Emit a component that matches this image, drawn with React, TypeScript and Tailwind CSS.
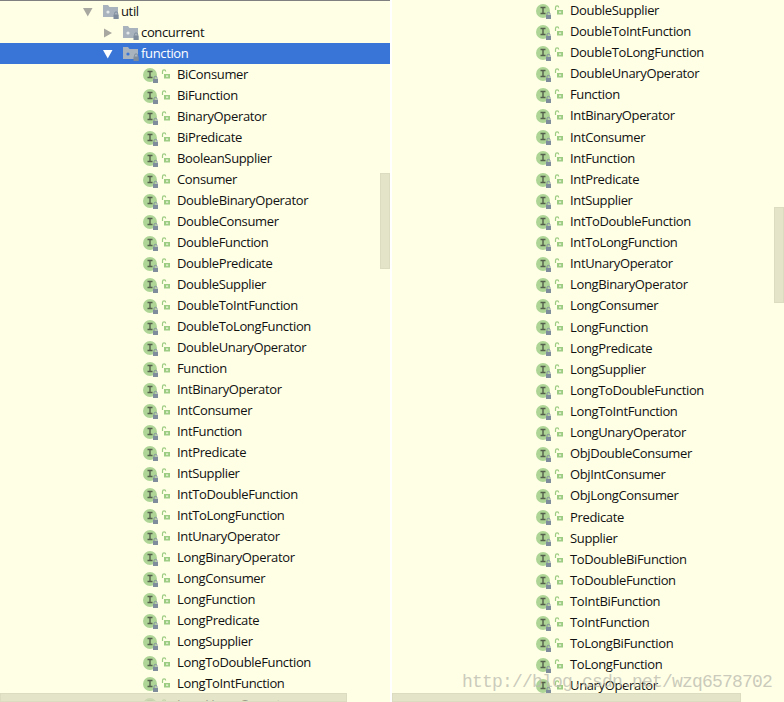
import React from 'react';

const LEFT_ITEMS = [
  'BiConsumer', 'BiFunction', 'BinaryOperator', 'BiPredicate', 'BooleanSupplier', 'Consumer',
  'DoubleBinaryOperator', 'DoubleConsumer', 'DoubleFunction', 'DoublePredicate', 'DoubleSupplier',
  'DoubleToIntFunction', 'DoubleToLongFunction', 'DoubleUnaryOperator', 'Function', 'IntBinaryOperator',
  'IntConsumer', 'IntFunction', 'IntPredicate', 'IntSupplier', 'IntToDoubleFunction', 'IntToLongFunction',
  'IntUnaryOperator', 'LongBinaryOperator', 'LongConsumer', 'LongFunction', 'LongPredicate', 'LongSupplier',
  'LongToDoubleFunction', 'LongToIntFunction', 'LongUnaryOperator',
];

const RIGHT_ITEMS = [
  'DoubleSupplier', 'DoubleToIntFunction', 'DoubleToLongFunction', 'DoubleUnaryOperator', 'Function',
  'IntBinaryOperator', 'IntConsumer', 'IntFunction', 'IntPredicate', 'IntSupplier', 'IntToDoubleFunction',
  'IntToLongFunction', 'IntUnaryOperator', 'LongBinaryOperator', 'LongConsumer', 'LongFunction',
  'LongPredicate', 'LongSupplier', 'LongToDoubleFunction', 'LongToIntFunction', 'LongUnaryOperator',
  'ObjDoubleConsumer', 'ObjIntConsumer', 'ObjLongConsumer', 'Predicate', 'Supplier', 'ToDoubleBiFunction',
  'ToDoubleFunction', 'ToIntBiFunction', 'ToIntFunction', 'ToLongBiFunction', 'ToLongFunction', 'UnaryOperator',
];

function InterfaceIcon() {
  return (
    <svg width="34" height="18" viewBox="0 0 34 18" className="shrink-0">
      <circle cx="7" cy="9" r="7" fill="#aed596" />
      <path d="M4.5 5.5h5M4.5 11.5h5M7 5.5v6" stroke="#55604c" strokeWidth="1.4" fill="none" />
      {/* small grey lock on the badge */}
      <path d="M11 13v-1.2a1.5 1.5 0 0 1 3 0V13" stroke="#7f8c9c" strokeWidth="1" fill="none" />
      <rect x="10" y="13" width="5" height="4" fill="#7f8c9c" />
      {/* open padlock, public access */}
      <path d="M19.5 8V5.5a1.6 1.6 0 0 1 3.2 0" stroke="#9ccb82" strokeWidth="1.2" fill="none" />
      <rect x="21" y="8" width="6" height="4.5" fill="#9ccb82" />
      <rect x="23" y="9.3" width="2.2" height="1.8" fill="#dcedc8" />
    </svg>
  );
}

function FolderIcon({ dot }: { dot: string }) {
  return (
    <svg width="17" height="17" viewBox="0 0 17 17" className="shrink-0">
      <path d="M0 2h5l1.5 2H15v10H0z" fill="#a8b3bd" />
      <circle cx="5" cy="9" r="1.6" fill={dot} />
      <path d="M11.5 11.5v-1a1.6 1.6 0 0 1 3.2 0v1" stroke="#7f8c9c" strokeWidth="1" fill="none" />
      <rect x="10.5" y="11.5" width="5.2" height="4.5" fill="#7f8c9c" />
    </svg>
  );
}

function Arrow({ open, color }: { open: boolean; color: string }) {
  return (
    <svg width="10" height="10" viewBox="0 0 10 10" className="shrink-0">
      <path d={open ? 'M0 1h9.5L4.75 9.5z' : 'M1 0.5L9 5 1 9.5z'} fill={color} />
    </svg>
  );
}

function ClassRow({ name, right }: { name: string; right?: boolean }) {
  return (
    <div className={right ? 'flex h-[21.12px] shrink-0 items-center pl-[144px]' : 'flex h-[21px] shrink-0 items-center pl-[143px]'}>
      <InterfaceIcon />
      <span className="text-[13px] tracking-[-0.35px] text-[#111111]">{name}</span>
    </div>
  );
}

function Scrollbar({ className }: { className: string }) {
  return <div className={`absolute border border-[#dcdcc0] bg-[#d8d8bc]/70 ${className}`} />;
}

export default function App() {
  return (
    <div className="flex h-[702px] w-[784px] overflow-hidden bg-white font-['Open_Sans',sans-serif]">
      <div className="relative h-full w-[390px] overflow-hidden bg-[#ffffe6]">
        <div className="h-px bg-[#808080]" />
        <div className="flex h-[21px] items-center pl-[83px]">
          <Arrow open color="#a8a8a0" />
          <div className="ml-[10px]"><FolderIcon dot="#e4e8e8" /></div>
          <span className="ml-px text-[13px] tracking-[-0.35px] text-[#111111]">util</span>
        </div>
        <div className="flex h-[21px] items-center pl-[103px]">
          <Arrow open={false} color="#a8a8a0" />
          <div className="ml-[10px]"><FolderIcon dot="#e4e8e8" /></div>
          <span className="ml-px text-[13px] tracking-[-0.35px] text-[#111111]">concurrent</span>
        </div>
        <div className="flex h-[21px] items-center bg-[#3875d7] pl-[103px]">
          <Arrow open color="#ffffff" />
          <div className="ml-[10px]"><FolderIcon dot="#3875d7" /></div>
          <span className="ml-px text-[13px] tracking-[-0.35px] text-white">function</span>
        </div>
        {LEFT_ITEMS.map((name) => (
          <ClassRow key={name} name={name} />
        ))}
        <Scrollbar className="right-0 top-[173px] h-[96px] w-[10px]" />
        <Scrollbar className="bottom-0 left-0 h-[9px] w-[347px]" />
      </div>

      <div className="w-[2px] shrink-0 bg-white" />

      <div className="relative h-full flex-1 overflow-hidden bg-[#ffffe6] pt-[0.1px]">
        {RIGHT_ITEMS.map((name) => (
          <ClassRow key={name} name={name} right />
        ))}
        <Scrollbar className="right-0 top-[207px] h-[96px] w-[10px]" />
        <Scrollbar className="bottom-0 left-0 h-[9px] w-[349px]" />
        <div className="absolute left-[70px] top-[669px] font-['Liberation_Mono',monospace] text-[18px] tracking-[-0.8px] text-[#bdbdb0]/80">
          http://blog.csdn.net/wzq6578702
        </div>
      </div>
    </div>
  );
}
